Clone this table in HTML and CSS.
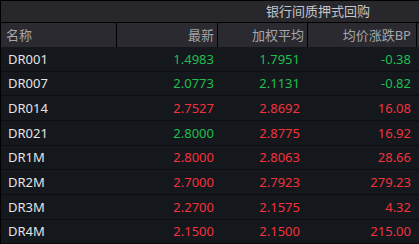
FILE: index.html
```html
<!DOCTYPE html>
<html lang="zh">
<head>
<meta charset="utf-8">
<link rel="stylesheet" href="styles.css">
</head>
<body>
<div class="panel">
  <div class="title-row">
    <div class="title-spacer"></div>
    <div class="title">银行间质押式回购</div>
  </div>
  <div class="row head">
    <div class="cell name">名称</div>
    <div class="cell num">最新</div>
    <div class="cell num">加权平均</div>
    <div class="cell num last">均价涨跌BP</div>
  </div>
  <div class="row">
    <div class="cell name">DR001</div>
    <div class="cell num up-no g">1.4983</div>
    <div class="cell num g">1.7951</div>
    <div class="cell num g last">-0.38</div>
  </div>
  <div class="row">
    <div class="cell name">DR007</div>
    <div class="cell num g">2.0773</div>
    <div class="cell num g">2.1131</div>
    <div class="cell num g last">-0.82</div>
  </div>
  <div class="row">
    <div class="cell name">DR014</div>
    <div class="cell num r">2.7527</div>
    <div class="cell num r">2.8692</div>
    <div class="cell num r last">16.08</div>
  </div>
  <div class="row">
    <div class="cell name">DR021</div>
    <div class="cell num g">2.8000</div>
    <div class="cell num r">2.8775</div>
    <div class="cell num r last">16.92</div>
  </div>
  <div class="row">
    <div class="cell name">DR1M</div>
    <div class="cell num r">2.8000</div>
    <div class="cell num r">2.8063</div>
    <div class="cell num r last">28.66</div>
  </div>
  <div class="row">
    <div class="cell name">DR2M</div>
    <div class="cell num r">2.7000</div>
    <div class="cell num r">2.7923</div>
    <div class="cell num r last">279.23</div>
  </div>
  <div class="row">
    <div class="cell name">DR3M</div>
    <div class="cell num r">2.2700</div>
    <div class="cell num r">2.1575</div>
    <div class="cell num r last">4.32</div>
  </div>
  <div class="row">
    <div class="cell name">DR4M</div>
    <div class="cell num r">2.1500</div>
    <div class="cell num r">2.1500</div>
    <div class="cell num r last">215.00</div>
  </div>
</div>
</body>
</html>
```

FILE: styles.css
```css
html, body {
  margin: 0;
  padding: 0;
  background: #14171c;
  overflow: hidden;
}
body {
  font-family: "Noto Sans", "Noto Sans CJK SC", sans-serif;
  font-size: 13px;
}
.panel {
  width: 419px;
  height: 244px;
  border-left: 1px solid #000;
  box-sizing: border-box;
  background: #14171c;
}
.title-row {
  display: grid;
  grid-template-columns: 217px 1fr;
  height: 21px;
  border-top: 1px solid #000;
  border-bottom: 1px solid #000;
  background: #27272c;
  color: #c4c5ca;
}
.title {
  text-align: center;
  line-height: 21px;
  padding-right: 1px;
}
.row {
  display: grid;
  grid-template-columns: 116px 101px 90px 109px 2px;
  height: 24.67px;
  box-sizing: border-box;
  border-bottom: 1px solid #0b0d10;
  align-items: center;
  color: #e4e4e6;
}
.row.head {
  height: 24px;
  border-bottom: none;
  background: #2a2a30;
  color: #a5a6ab;
  align-items: stretch;
}
.row.head .cell {
  border-right: 1px solid #000;
  line-height: 24px;
}
.row.head .name {
  padding-left: 5px;
}
.row.head .num {
  padding-right: 3px;
}
.row.head .last {
  padding-right: 5px;
}
.cell {
  white-space: nowrap;
}
.name {
  padding-left: 7px;
}
.num {
  text-align: right;
  padding-right: 4px;
}
.row .num:nth-child(3) {
  padding-right: 8px;
}
.row.head .num:nth-child(3) {
  padding-right: 3px;
}
.last {
  padding-right: 6px;
}
.g {
  color: #1fbf4f;
}
.r {
  color: #f2333d;
}
```
